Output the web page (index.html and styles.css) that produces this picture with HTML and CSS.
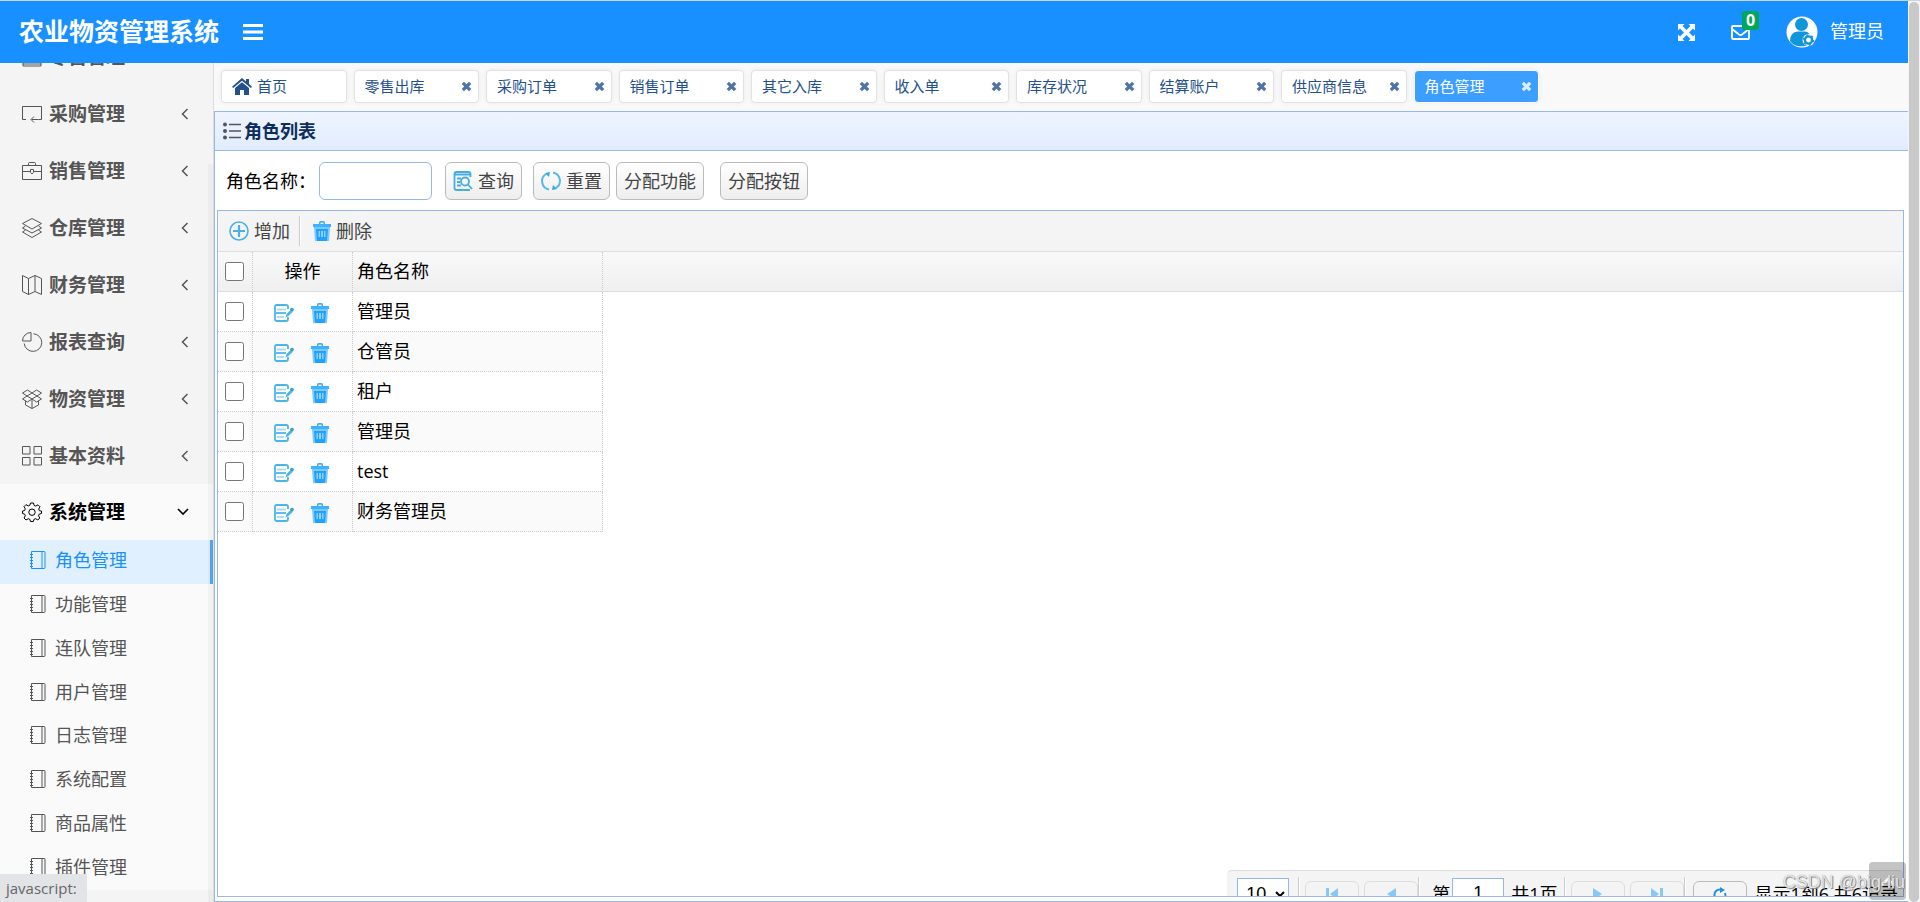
FILE: index.html
```html
<!DOCTYPE html>
<html lang="zh-CN">
<head>
<meta charset="utf-8">
<title>农业物资管理系统</title>
<link rel="stylesheet" href="styles.css">
</head>
<body>
<svg class="sprite" aria-hidden="true">
  <symbol id="i-book" viewBox="0 0 20 20"><path d="M3.500 1.500h12.500a1 1 0 0 1 1 1v15a1 1 0 0 1-1 1h-12.500zM14 1.500v17M2 4.500h3M2 7.500h3M2 10.500h3M2 13.500h3M2 16.500h3"/></symbol>
  <symbol id="i-trash" viewBox="0 0 18 20"><path fill="#3fb1ff" d="M6 3V1.500Q6 0 7.500 0h3Q12 0 12 1.500V3h6v3H0V3zm1.500 0h3V1.800h-3z"/><path fill="#7cc9ff" d="M1 6h16l-1 14H2z"/><path fill="#1ea1ff" d="M3 8h12l-1 12H4z"/><path fill="#8fd0ff" d="M5.500 10h7v6h-7z"/><path stroke="#1ea1ff" d="M7.500 10v6M10.500 10v6"/></symbol>
  <symbol id="i-edit" viewBox="0 0 20 20"><g fill="none" stroke="#4db4e8" stroke-width="1.800"><path d="M14 6V3.500a1.500 1.500 0 0 0-1.500-1.500h-10A1.500 1.500 0 0 0 1 3.500v13A1.500 1.500 0 0 0 2.500 18h9.500a2 2 0 0 0 2-2v-2"/><path d="M3 6.500h9" stroke="#a5daf5"/><path d="M2 10h10"/><path d="M3 14h7" stroke="#a5daf5"/></g><path d="M11.500 14.500l1-3.500 4.500-4.500 2 2-4.500 4.500z" fill="#4db4e8"/><circle cx="18" cy="6.500" r="1.800" fill="#2f9fd8"/></symbol>
  <symbol id="i-x" viewBox="0 0 12 12"><path d="M2 2l8 8M10 2l-8 8" stroke="currentColor" stroke-width="3.600" fill="none"/></symbol>
  <symbol id="i-left" viewBox="0 0 8 12"><path d="M6.500 1L1.500 6l5 5" fill="none" stroke="currentColor" stroke-width="1.500"/></symbol>
</svg>

<div class="app">
  <header class="topbar">
    <h1 class="brand">农业物资管理系统</h1>
    <button class="icon-btn" aria-label="切换菜单"><svg width="20" height="16" viewBox="0 0 20 16"><path d="M0 1.500h20M0 8h20M0 14.500h20" stroke="#fff" stroke-width="3"/></svg></button>
    <div class="tools">
      <button class="icon-btn" aria-label="全屏"><svg width="17" height="17" viewBox="0 0 17 17"><path fill="#fff" d="M0 0h6.500L4.500 2l4 4 4-4-2-2H17v6.500l-2-2-4 4 4 4 2-2V17h-6.500l2-2-4-4-4 4 2 2H0v-6.500l2 2 4-4-4-4-2 2z"/></svg></button>
      <button class="icon-btn mail" aria-label="消息"><svg width="19" height="15" viewBox="0 0 19 15"><g fill="none" stroke="#fff" stroke-width="1.800"><rect x="1" y="1" width="17" height="13" rx="1"/><path d="M1 4l7 5.500q1.500 1 3 0l7-5.500"/></g></svg><span class="badge">0</span></button>
      <a class="user" href="#"><svg width="32" height="32" viewBox="0 0 32 32"><circle cx="16" cy="16" r="15.500" fill="#fff"/><g fill="#1296db"><circle cx="15.500" cy="8.500" r="6.500"/><path d="M4 25q0-9 8-9.500h7q3 0 5 3l-5 4 2 7q-12 3-17-4.500z"/></g><circle cx="22.500" cy="24" r="6" fill="#fff"/><circle cx="22.500" cy="24" r="3.600" fill="none" stroke="#1296db" stroke-width="2.400"/><circle cx="22.500" cy="24" r="5" fill="none" stroke="#1296db" stroke-width="1.500" stroke-dasharray="2 3.200"/></svg><span>管理员</span></a>
    </div>
  </header>

  <nav class="sidebar">
    <ul class="menu">
      <li><a class="item" href="#"><svg class="mi" viewBox="0 0 20 20"><path d="M1 3h18v16H1zM1 17h18"/></svg><span>零售管理</span><svg class="arrow"><use href="#i-left"/></svg></a></li>
      <li><a class="item" href="#"><svg class="mi" viewBox="0 0 20 20"><path d="M4 15.500H.500v-13h19v13h-3M16.500 15.500h-7M12 12.500l-3 3 3 3"/></svg><span>采购管理</span><svg class="arrow"><use href="#i-left"/></svg></a></li>
      <li><a class="item" href="#"><svg class="mi" viewBox="0 0 20 20"><path d="M.500 4.500h19v14H.500zM6.500 4.500v-2q0-1 1-1h5q1 0 1 1v2M.500 10.500h8M11.500 10.500h8M8.500 8.500h3v3l-1.500 1.500-1.500-1.500z"/></svg><span>销售管理</span><svg class="arrow"><use href="#i-left"/></svg></a></li>
      <li><a class="item" href="#"><svg class="mi" viewBox="0 0 20 20"><path d="M10 .500l9.500 5L10 11 .500 5.500zM3.500 8L.500 10 10 15l9.500-5-3-2M3.500 12L.500 14 10 19.500l9.500-5.500-3-2"/></svg><span>仓库管理</span><svg class="arrow"><use href="#i-left"/></svg></a></li>
      <li><a class="item" href="#"><svg class="mi" viewBox="0 0 20 20"><path d="M.500.500l6 3 6.500-3 6.500 3v16l-6.500-3-6.500 3-6-3zM6.500 3.500v16M13 .500v16"/></svg><span>财务管理</span><svg class="arrow"><use href="#i-left"/></svg></a></li>
      <li><a class="item" href="#"><svg class="mi" viewBox="0 0 20 20"><path d="M9 .500A8.500 8.500 0 0 0 .500 9H9zM11.500 1.800A8.800 8.800 0 1 1 2.200 11.500"/></svg><span>报表查询</span><svg class="arrow"><use href="#i-left"/></svg></a></li>
      <li><a class="item" href="#"><svg class="mi" viewBox="0 0 20 20"><path d="M5.500 1L10 4l4.500-3 5 3-4.500 3 4.500 3-5 3L10 10l-4.500 3-5-3L5 7 .500 4zM10 4l5 3-5 3-5-3zM3.500 12v4l6.500 3.500 6.500-3.500v-4M10 10v9.500"/></svg><span>物资管理</span><svg class="arrow"><use href="#i-left"/></svg></a></li>
      <li><a class="item" href="#"><svg class="mi" viewBox="0 0 20 20"><path d="M.500.500h7.500v7.500H.500zM12 .500h7.500v7.500H12zM.500 11.500h7.500v7.500H.500zM12 11.500h7.500v7.500H12z"/></svg><span>基本资料</span><svg class="arrow"><use href="#i-left"/></svg></a></li>
      <li class="open"><a class="item" href="#"><svg class="mi" viewBox="0 0 20 20"><path d="M8.500 1h3l.600 2.400 1.700.700 2.200-1.300 2 2-1.300 2.200.700 1.700L19.500 9v2.500l-2.300.600-.700 1.700 1.300 2.200-2 2-2.200-1.300-1.700.700-.600 2.100h-2.800l-.600-2.100-1.700-.700L4 18l-2-2 1.300-2.200-.700-1.700L.500 11.500V9l2.100-.500.700-1.700L2 4.600l2-2 2.200 1.300 1.700-.700z"/><circle cx="10" cy="10.200" r="3.200"/></svg><span>系统管理</span><svg class="arrow-down" viewBox="0 0 12 8"><path d="M1 1l5 5 5-5" fill="none" stroke="currentColor" stroke-width="1.600"/></svg></a>
        <ul class="submenu">
          <li><a class="sub current" href="#"><svg class="bk"><use href="#i-book"/></svg>角色管理</a></li>
          <li><a class="sub" href="#"><svg class="bk"><use href="#i-book"/></svg>功能管理</a></li>
          <li><a class="sub" href="#"><svg class="bk"><use href="#i-book"/></svg>连队管理</a></li>
          <li><a class="sub" href="#"><svg class="bk"><use href="#i-book"/></svg>用户管理</a></li>
          <li><a class="sub" href="#"><svg class="bk"><use href="#i-book"/></svg>日志管理</a></li>
          <li><a class="sub" href="#"><svg class="bk"><use href="#i-book"/></svg>系统配置</a></li>
          <li><a class="sub" href="#"><svg class="bk"><use href="#i-book"/></svg>商品属性</a></li>
          <li><a class="sub" href="#"><svg class="bk"><use href="#i-book"/></svg>插件管理</a></li>
        </ul>
      </li>
    </ul>
    <div class="side-scroll"></div>
  </nav>

  <main class="content">
    <div class="tabs">
      <div class="tab"><a href="#"><svg width="20" height="17" viewBox="0 0 20 17"><path fill="currentColor" d="M10 0l4 3.500V1h3v5l3 2.700-1.200 1.400L10 2.800 1.200 10.100 0 8.700zM10 4.300l7 5.700v7h-5v-5H8v5H3v-7z"/></svg>首页</a></div>
      <div class="tab"><a href="#">零售出库</a><button aria-label="关闭"><svg><use href="#i-x"/></svg></button></div>
      <div class="tab"><a href="#">采购订单</a><button aria-label="关闭"><svg><use href="#i-x"/></svg></button></div>
      <div class="tab"><a href="#">销售订单</a><button aria-label="关闭"><svg><use href="#i-x"/></svg></button></div>
      <div class="tab"><a href="#">其它入库</a><button aria-label="关闭"><svg><use href="#i-x"/></svg></button></div>
      <div class="tab"><a href="#">收入单</a><button aria-label="关闭"><svg><use href="#i-x"/></svg></button></div>
      <div class="tab"><a href="#">库存状况</a><button aria-label="关闭"><svg><use href="#i-x"/></svg></button></div>
      <div class="tab"><a href="#">结算账户</a><button aria-label="关闭"><svg><use href="#i-x"/></svg></button></div>
      <div class="tab"><a href="#">供应商信息</a><button aria-label="关闭"><svg><use href="#i-x"/></svg></button></div>
      <div class="tab active"><a href="#">角色管理</a><button aria-label="关闭"><svg><use href="#i-x"/></svg></button></div>
    </div>

    <section class="panel">
      <h2 class="panel-title"><svg width="18" height="18" viewBox="0 0 18 18"><g fill="#555"><circle cx="2" cy="2.500" r="2"/><circle cx="2" cy="9" r="2"/><circle cx="2" cy="15.500" r="2"/></g><path d="M6 2.500h12M6 9h12M6 15.500h12" stroke="#555" stroke-width="1.300"/></svg>角色列表</h2>
      <form class="search">
        <label for="role">角色名称：</label>
        <input id="role" type="text">
        <button type="button" class="btn"><svg width="20" height="20" viewBox="0 0 20 20"><g fill="none" stroke="#46ade0" stroke-width="1.800"><path d="M17.500 6V3q0-2-2-2h-12q-2 0-2 2v14q0 2 2 2H17M17.500 3.500h-16"/><path d="M4 7.500h4M4 11h3M4 14.500h4"/><circle cx="12" cy="10.500" r="4"/><path d="M15 13.500l4 4.500"/></g></svg>查询</button>
        <button type="button" class="btn reset"><svg width="20" height="20" viewBox="0 0 20 20"><g fill="none" stroke="#5bb8ea" stroke-width="2"><path d="M8 18.500A8.500 8.500 0 0 1 5 3M12 1.500a8.500 8.500 0 0 1 3 15.500"/></g><path fill="#3ba6de" d="M4 2l5-1-1 5zM16 18l-5 1 1-5z"/></svg>重置</button>
        <button type="button" class="btn">分配功能</button>
        <button type="button" class="btn last">分配按钮</button>
      </form>

      <div class="grid">
        <div class="toolbar">
          <button type="button"><svg width="20" height="20" viewBox="0 0 20 20"><g fill="none" stroke="#4bb0e6"><circle cx="10" cy="10" r="9" stroke-width="1.600"/><path d="M10 4v12M4 10h12" stroke-width="2.200"/></g></svg>增加</button>
          <span class="sep"></span>
          <button type="button"><svg width="18" height="20"><use href="#i-trash"/></svg>删除</button>
        </div>
        <table class="roles">
          <colgroup><col class="c-check"><col class="c-op"><col class="c-name"><col></colgroup>
          <thead><tr><th><input type="checkbox" aria-label="全选"></th><th class="op">操作</th><th class="name">角色名称</th><td></td></tr></thead>
          <tbody>
            <tr><td><input type="checkbox" aria-label="管理员"></td><td><div class="ops"><button aria-label="编辑"><svg width="20" height="20"><use href="#i-edit"/></svg></button><button aria-label="删除"><svg width="18" height="20"><use href="#i-trash"/></svg></button></div></td><td class="name">管理员</td><td></td></tr>
            <tr><td><input type="checkbox" aria-label="仓管员"></td><td><div class="ops"><button aria-label="编辑"><svg width="20" height="20"><use href="#i-edit"/></svg></button><button aria-label="删除"><svg width="18" height="20"><use href="#i-trash"/></svg></button></div></td><td class="name">仓管员</td><td></td></tr>
            <tr><td><input type="checkbox" aria-label="租户"></td><td><div class="ops"><button aria-label="编辑"><svg width="20" height="20"><use href="#i-edit"/></svg></button><button aria-label="删除"><svg width="18" height="20"><use href="#i-trash"/></svg></button></div></td><td class="name">租户</td><td></td></tr>
            <tr><td><input type="checkbox" aria-label="管理员"></td><td><div class="ops"><button aria-label="编辑"><svg width="20" height="20"><use href="#i-edit"/></svg></button><button aria-label="删除"><svg width="18" height="20"><use href="#i-trash"/></svg></button></div></td><td class="name">管理员</td><td></td></tr>
            <tr><td><input type="checkbox" aria-label="test"></td><td><div class="ops"><button aria-label="编辑"><svg width="20" height="20"><use href="#i-edit"/></svg></button><button aria-label="删除"><svg width="18" height="20"><use href="#i-trash"/></svg></button></div></td><td class="name">test</td><td></td></tr>
            <tr><td><input type="checkbox" aria-label="财务管理员"></td><td><div class="ops"><button aria-label="编辑"><svg width="20" height="20"><use href="#i-edit"/></svg></button><button aria-label="删除"><svg width="18" height="20"><use href="#i-trash"/></svg></button></div></td><td class="name">财务管理员</td><td></td></tr>
          </tbody>
        </table>
        <div class="pager-clip">
          <div class="pager">
            <select aria-label="每页条数"><option>10</option></select>
            <span class="sep"></span>
            <button class="pg" aria-label="首页"><svg width="12" height="12" viewBox="0 0 12 12"><path fill="#86c8f7" d="M0 0h3v12H0zM12 0v12L4 6z"/></svg></button>
            <button class="pg" aria-label="上一页"><svg width="12" height="12" viewBox="0 0 12 12"><path fill="#86c8f7" d="M11 0v12L2 6z"/></svg></button>
            <span class="sep"></span>
            <label for="page">第</label><input id="page" type="text" value="1"><span class="total">共1页</span>
            <span class="sep"></span>
            <button class="pg" aria-label="下一页"><svg width="12" height="12" viewBox="0 0 12 12"><path fill="#86c8f7" d="M1 0v12l9-6z"/></svg></button>
            <button class="pg" aria-label="末页"><svg width="12" height="12" viewBox="0 0 12 12"><path fill="#86c8f7" d="M9 0h3v12H9zM0 0v12l8-6z"/></svg></button>
            <span class="sep"></span>
            <button class="pg on" aria-label="刷新"><svg width="14" height="14" viewBox="0 0 14 14"><path d="M5 13A5.500 5.500 0 0 1 3 4q2-2 5-1.500M12 6a5.500 5.500 0 0 1-3 7" fill="none" stroke="#2490e0" stroke-width="2"/><path d="M7 0l5 3-5 3z" fill="#2490e0"/></svg></button>
            <span class="info">显示1到6,共6记录</span>
          </div>
        </div>
      </div>
    </section>
  </main>
</div>
<div class="page-scroll"><div class="thumb"></div></div>

<button class="to-top" aria-label="返回顶部"><svg width="14" height="9" viewBox="0 0 14 9"><path d="M1 8l6-6 6 6" fill="none" stroke="#fff" stroke-width="2.500"/></svg></button>
<div class="watermark">CSDN @big-liu</div>
<div class="status">javascript:</div>
</body>
</html>
```
FILE: styles.css
```css
* { box-sizing: border-box; }
html, body { height: 100%; }
body {
  margin: 0;
  display: flex;
  overflow: hidden;
  border-top: 1px solid #ccd4db;
  background: #f4f4f4;
  color: #000;
  font: 18px/24px "Open Sans", "Noto Sans CJK SC", sans-serif;
}
a { color: inherit; text-decoration: none; }
ul { list-style: none; margin: 0; padding: 0; }
button { border: 0; padding: 0; background: none; font: inherit; color: inherit; cursor: pointer; }
svg { display: block; flex: none; }
.sprite { position: absolute; width: 0; height: 0; }

.app {
  flex: 1;
  min-width: 0;
  height: 100%;
  display: grid;
  grid-template: 62px minmax(0, 1fr) / 214px minmax(0, 1fr);
}

/* top bar */
.topbar {
  grid-column: 1 / -1;
  z-index: 1;
  display: flex;
  align-items: center;
  padding: 0 24px 0 19px;
  background: #1890ff;
  color: #fff;
}
.brand { margin: 0 24px 0 0; padding-bottom: 2px; font-size: 25px; line-height: 36px; font-weight: 700; }
.tools { margin-left: auto; display: flex; align-items: center; }
.mail { position: relative; margin: 0 36px; }
.badge {
  position: absolute;
  left: 11px;
  top: -14px;
  width: 17px;
  border-radius: 3px;
  background: #00a65a;
  font-size: 16px;
  line-height: 19px;
  font-weight: 700;
}
.user { display: flex; align-items: center; gap: 12px; }
.user span { padding-bottom: 2px; }

/* side menu */
.sidebar { position: relative; overflow: hidden; border-right: 1px solid #ddd; background: #f4f4f4; color: #555; }
.menu { margin-top: -35px; }
.item {
  display: flex;
  align-items: center;
  gap: 7px;
  height: 57px;
  padding: 0 24px 0 22px;
  font-size: 19px;
  font-weight: 700;
}
.mi { width: 20px; height: 20px; fill: none; stroke: currentColor; overflow: visible; }
.arrow { width: 8px; height: 12px; margin-left: auto; }
.arrow-down { width: 12px; height: 8px; margin-left: auto; }
.open { background: #fafafa; }
.open > .item { height: 56px; color: #000; }
.submenu { display: grid; grid-auto-rows: 1fr; height: 350px; }
.sub { display: flex; align-items: center; gap: 7px; height: 100%; padding: 0 0 3px 28px; }
.sub.current { background: #e1f0ff; color: #1890ff; border-right: 3px solid #5ba8f0; }
.bk { width: 20px; height: 20px; fill: none; stroke: currentColor; }
.side-scroll { position: absolute; right: 0; top: 101px; bottom: 0; width: 5px; background: rgba(0, 0, 0, .03); }

/* page tabs */
.content { display: flex; flex-direction: column; min-width: 0; min-height: 0; background: #f9f9f9; }
.tabs {
  display: grid;
  grid-template-columns: repeat(10, 1fr);
  gap: 7px;
  max-width: 1333px;
  padding: 7px 8px 8px 7px;
}
.tab {
  display: flex;
  align-items: center;
  justify-content: space-between;
  height: 33px;
  padding: 0 6px 1px 10px;
  border: 1px solid #e2e2e2;
  border-radius: 4px;
  background: #fff;
  box-shadow: 0 0 5px rgba(0, 0, 0, .06);
  color: #23508e;
  font-size: 15px;
}
.tab a { display: flex; align-items: center; gap: 5px; }
.tab button { color: #4f74a8; }
.tab button svg { width: 11px; height: 11px; }
.tab.active { background: #3c9fff; border-color: #fff; color: #fff; }
.tab.active button { color: #d8ecff; }

/* role panel */
.panel {
  flex: 1;
  min-height: 0;
  display: flex;
  flex-direction: column;
  border: 1px solid #95b8e7;
  border-right: 0;
  background: #fff;
}
.panel-title {
  display: flex;
  align-items: center;
  gap: 3px;
  height: 39px;
  margin: 0;
  padding-left: 8px;
  border-bottom: 1px solid #95b8e7;
  background: linear-gradient(#eff5ff, #e0ecff);
  color: #0e2d5f;
  font-size: 18px;
  font-weight: 700;
}
.search { display: flex; align-items: center; padding: 11px 11px 10px; }
.search label { margin-right: 3px; }
.search input { width: 113px; height: 38px; margin-right: 13px; border: 1px solid #95b8e7; border-radius: 6px; font: inherit; }
.btn {
  display: flex;
  align-items: center;
  gap: 5px;
  height: 38px;
  margin-right: 11px;
  padding: 0 7px;
  border: 1px solid #bbb;
  border-radius: 6px;
  background: linear-gradient(#fff, #eee);
  color: #444;
}
.btn.reset { margin-right: 6px; }
.btn.last { margin-left: 5px; }

.grid {
  flex: 1;
  min-height: 0;
  display: flex;
  flex-direction: column;
  margin: 0 4px 4px 2px;
  border: 1px solid #95b8e7;
}
.toolbar {
  display: flex;
  align-items: center;
  height: 41px;
  padding-left: 11px;
  border-bottom: 1px solid #ddd;
  background: #f4f4f4;
  color: #444;
}
.toolbar button { display: flex; align-items: center; gap: 5px; }
.sep { width: 2px; height: 30px; border-left: 1px solid #ccc; border-right: 1px solid #fff; }
.toolbar .sep { margin: 0 12px 0 9px; }

.roles { width: 100%; table-layout: fixed; border-collapse: separate; border-spacing: 0; }
.c-check { width: 35px; }
.c-op { width: 100px; }
.c-name { width: 250px; }
.roles th, .roles td { height: 40px; padding: 0; border: 0 dotted #ccc; border-width: 0 1px 1px 0; font-weight: 400; text-align: center; }
.roles thead th, .roles thead td { border-bottom: 1px solid #ddd; }
.roles thead tr { background: linear-gradient(#f9f9f9, #efefef); }
.roles td:last-child { border-right: 0; }
.roles tbody td:last-child { border: 0; background: #fff; }
.roles .op { padding-bottom: 2px; }
.roles .name { padding: 0 0 2px 4px; text-align: left; }
.roles tbody tr:nth-child(even) { background: #fafafa; }
.roles input { display: block; width: 19px; height: 19px; margin: 0 0 0 7px; }
.ops { display: flex; justify-content: center; gap: 17px; padding: 3px 2px 0 0; }

/* pagination */
.pager-clip { display: flex; justify-content: flex-end; height: 26px; margin-top: auto; overflow: hidden; }
.pager {
  display: flex;
  align-items: center;
  height: 46px;
  padding: 0 5px 0 10px;
  border-top: 1px solid #ddd;
  border-radius: 5px 5px 0 0;
  background: #f4f4f4;
}
.pager select, .pager input { width: 52px; height: 32px; border: 1px solid #95b8e7; border-radius: 0; background: #fff; font: 18px/24px "Liberation Sans", sans-serif; }
.pager select { margin-right: 9px; padding-left: 4px; }
.pager input { margin: 0 7px 0 2px; text-align: center; }
.pager .sep { height: 34px; }
.pager label { margin-left: 12px; }
.total { margin-right: 7px; }
.pg { display: grid; place-items: center; width: 54px; height: 25px; margin: 0 0 0 5px; border: 1px solid #ddd; border-radius: 6px; }
.pg.on { margin: 0 7px; border-color: #bbb; }

/* overlays and scroll bar */
.page-scroll { width: 12px; padding: 1px 1px 0; background: #f4f4f4; }
.thumb { height: 100%; border-radius: 5px; background: #c9c9c9; }
.to-top {
  position: fixed;
  right: 14px;
  bottom: 2px;
  display: grid;
  place-items: center;
  width: 37px;
  height: 38px;
  border-radius: 4px;
  background: rgba(0, 0, 0, .23);
}
.watermark {
  position: fixed;
  right: 15px;
  bottom: 8px;
  color: rgba(255, 255, 255, .8);
  font-family: "Liberation Sans", sans-serif;
  text-shadow: 0 0 1px #777, 1px 1px 1px #888;
}
.status { position: fixed; left: 0; bottom: 0; padding: 2px 10px 2px 6px; background: #e3e4e8; color: #666; font-size: 15px; }
```
